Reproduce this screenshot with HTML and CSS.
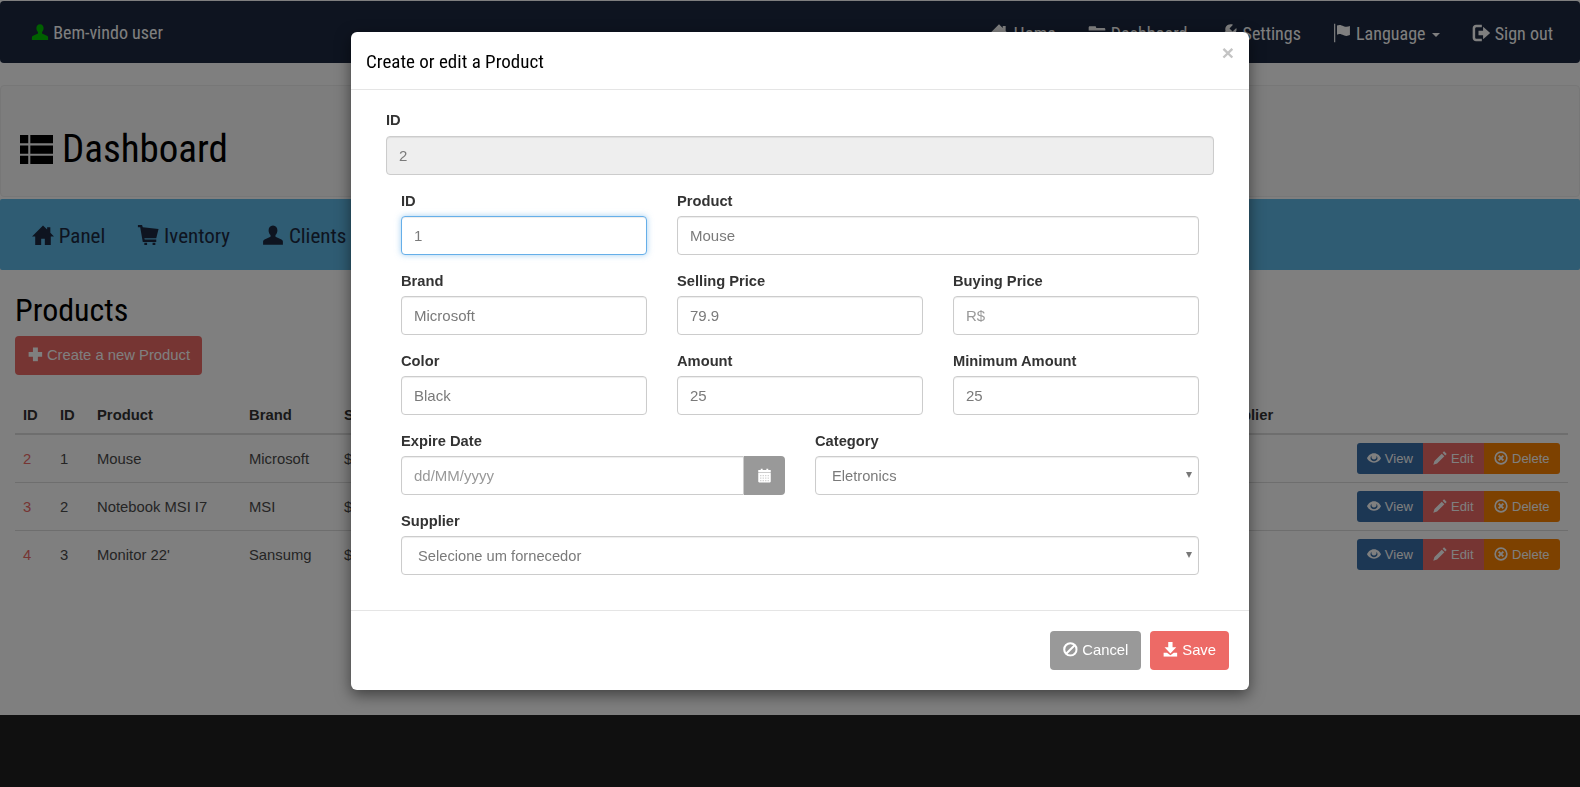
FILE: index.html
```html
<!DOCTYPE html>
<html lang="en">
<head>
    <meta charset="UTF-8">
    <meta name="viewport" content="width=device-width, initial-scale=1.0">
    <title>Dashboard</title>
    <link rel="stylesheet" href="styles.css">
</head>
<body>
    <svg class="sprite" aria-hidden="true">
        <symbol id="i-user" viewBox="0 0 24 24"><path d="M12 1.500c-3.200 0-4.800 2.400-4.800 5.200 0 2.100.8 4.100 2.100 5.400v1.800L2.800 17c-1.100.5-1.600 1.300-1.600 2.500v3h21.600v-3c0-1.200-.5-2-1.600-2.500l-6.500-3.100v-1.800c1.300-1.300 2.100-3.300 2.100-5.400 0-2.800-1.600-5.200-4.800-5.200z"/></symbol>
        <symbol id="i-home" viewBox="0 0 24 24"><path d="M12 1.500 0 13.500h3.500V23h6.500v-7h4v7h6.500v-9.500H24L20 9.500V3.500h-3.500v2.500z"/></symbol>
        <symbol id="i-folder" viewBox="0 0 24 24"><path d="M2 9V5.500C2 4.700 2.700 4 3.500 4h6c.8 0 1.500.7 1.500 1.500V6h9.500c.8 0 1.500.7 1.500 1.500V9zM2 11h20v8.500c0 .8-.7 1.500-1.500 1.500h-17C2.700 21 2 20.300 2 19.500z"/></symbol>
        <symbol id="i-wrench" viewBox="0 0 24 24"><path d="M22 6l-4.500 4.200-3.700-3.700L18 2c-3-1.200-6.500-.4-8.300 2.200-1.100 1.700-1.200 3.700-.6 5.500L2.500 16.300c-1.200 1.200-1.200 3 0 4.200s3 1.200 4.200 0l6.600-6.600c1.800.6 3.900.4 5.600-.7C21.400 11.600 23.100 8.900 22 6z"/></symbol>
        <symbol id="i-flag" viewBox="0 0 24 24"><path d="M2.500 1h1.400v22H2.500zM6 3c3-1.500 5.500-.3 8 .8 2.500 1 5 .9 7.500-.3v11c-2.500 1.200-5 1.300-7.500.3-2.500-1.100-5-2.300-8-.8z"/></symbol>
        <symbol id="i-logout" viewBox="0 0 24 24"><path d="M2 6c0-2.200 1.800-4 4-4h7v3H6.500C5.700 5 5 5.700 5 6.500v11c0 .8.700 1.500 1.500 1.500H13v3H6c-2.200 0-4-1.800-4-4zM9 9.200h5.500V4.500L23 12l-8.500 7.500v-4.700H9z"/></symbol>
        <symbol id="i-list" viewBox="0 0 24 24"><path d="M0 1.500h6v6H0zM7.500 1.500H24v6H7.500zM0 9h6v6H0zM7.500 9H24v6H7.500zM0 16.500h6v6H0zM7.500 16.500H24v6H7.500z"/></symbol>
        <symbol id="i-cart" viewBox="0 0 24 24"><path d="M1 1h4.500l.8 2.500L23.500 5.500 21 15.500H8l.4 1.500H21v2.500H6.300L3.500 3.500H1zM8 20.500h3v2.500H8zM17 20.500h3v2.500h-3z"/></symbol>
        <symbol id="i-plus" viewBox="0 0 24 24"><path d="M8 1h8v7h7v8h-7v7H8v-7H1V8h7z"/></symbol>
        <symbol id="i-eye" viewBox="0 0 24 24"><path fill-rule="evenodd" d="M12 4C6 4 2 8.500 0 12.500 2 16.500 6 20 12 20s10-3.500 12-7.500C22 8.500 18 4 12 4zM12 17.500c-3.200 0-6-2.200-6-5 0-1.700.8-3.200 2-4.200-.2.600-.3 1.200-.3 1.900 0 2.500 1.900 4.300 4.300 4.300s4.300-1.800 4.300-4.300c0-.7-.1-1.300-.3-1.900 1.200 1 2 2.500 2 4.200 0 2.800-2.800 5-6 5z"/></symbol>
        <symbol id="i-pencil" viewBox="0 0 24 24"><path d="M19 .5l4.500 4.500-2.500 2.500-4.500-4.500zM15 4.500l4.500 4.500L7 21.500.5 23.500 2.500 17z"/></symbol>
        <symbol id="i-remove" viewBox="0 0 24 24"><circle cx="12" cy="12" r="10" fill="none" stroke="currentColor" stroke-width="2.800"/><path d="M8 8l8 8M16 8l-8 8" stroke="currentColor" stroke-width="3.400" fill="none"/></symbol>
        <symbol id="i-ban" viewBox="0 0 24 24"><circle cx="12" cy="12" r="10" fill="none" stroke="currentColor" stroke-width="3.400"/><path d="M5.500 18.500l13-13" stroke="currentColor" stroke-width="3.400" fill="none"/></symbol>
        <symbol id="i-calendar" viewBox="0 0 24 24"><path d="M6 1h3v2h6V1h3v2h3.500c.3 0 .5.200.5.500V7H2V3.500c0-.3.200-.5.500-.5H6zM2 8h20v13.500c0 .8-.7 1.500-1.500 1.500h-17C2.700 23 2 22.300 2 21.500z"/><path fill="#cfcfcf" d="M5 11h2v2H5zM9 11h2v2H9zM13 11h2v2h-2zM17 11h2v2h-2zM5 15h2v2H5zM9 15h2v2H9zM13 15h2v2h-2zM17 15h2v2h-2zM5 19h2v2H5zM9 19h2v2H9zM13 19h2v2h-2zM17 19h2v2h-2z"/></symbol>
        <symbol id="i-download" viewBox="0 0 24 24"><path d="M8.500 0h7v8.500h6L12 18.500 2.500 8.500h6zM1 17.500h5.500l5.500 4 5.500-4H23V24H1z"/></symbol>
    </svg>

    <div class="page">
        <nav class="topbar">
            <div class="welcome"><svg class="icon icon-green"><use href="#i-user"/></svg> Bem-vindo user</div>
            <ul class="topmenu">
                <li><svg class="icon"><use href="#i-home"/></svg> Home</li>
                <li><svg class="icon"><use href="#i-folder"/></svg> Dashboard</li>
                <li><svg class="icon"><use href="#i-wrench"/></svg> Settings</li>
                <li><svg class="icon"><use href="#i-flag"/></svg> Language <span class="caret"></span></li>
                <li><svg class="icon"><use href="#i-logout"/></svg> Sign out</li>
            </ul>
        </nav>

        <header class="jumbo">
            <h1><svg class="icon icon-list"><use href="#i-list"/></svg> Dashboard</h1>
        </header>

        <ul class="subnav">
            <li><svg class="icon"><use href="#i-home"/></svg> Panel</li>
            <li><svg class="icon"><use href="#i-cart"/></svg> Iventory</li>
            <li><svg class="icon"><use href="#i-user"/></svg> Clients</li>
        </ul>

        <main class="content">
            <h2>Products</h2>
            <button class="btn btn-red btn-create"><svg class="icon"><use href="#i-plus"/></svg> Create a new Product</button>

            <table class="products">
                <colgroup>
                    <col class="c-id"><col class="c-id"><col class="c-product"><col class="c-brand"><col class="c-price"><col class="c-supplier"><col class="c-actions">
                </colgroup>
                <thead>
                    <tr><th>ID</th><th>ID</th><th>Product</th><th>Brand</th><th>Selling Price</th><th>Supplier</th><th></th></tr>
                </thead>
                <tbody>
                    <tr>
                        <td><a class="rowlink">2</a></td><td>1</td><td>Mouse</td><td>Microsoft</td><td>$ 79.9</td><td></td>
                        <td class="actions"><div class="btn-group"><button class="mini mini-blue"><svg class="icon"><use href="#i-eye"/></svg> View</button><button class="mini mini-red"><svg class="icon"><use href="#i-pencil"/></svg> Edit</button><button class="mini mini-orange"><svg class="icon"><use href="#i-remove"/></svg> Delete</button></div></td>
                    </tr>
                    <tr>
                        <td><a class="rowlink">3</a></td><td>2</td><td>Notebook MSI I7</td><td>MSI</td><td>$ 3500</td><td></td>
                        <td class="actions"><div class="btn-group"><button class="mini mini-blue"><svg class="icon"><use href="#i-eye"/></svg> View</button><button class="mini mini-red"><svg class="icon"><use href="#i-pencil"/></svg> Edit</button><button class="mini mini-orange"><svg class="icon"><use href="#i-remove"/></svg> Delete</button></div></td>
                    </tr>
                    <tr>
                        <td><a class="rowlink">4</a></td><td>3</td><td>Monitor 22'</td><td>Sansumg</td><td>$ 600</td><td></td>
                        <td class="actions"><div class="btn-group"><button class="mini mini-blue"><svg class="icon"><use href="#i-eye"/></svg> View</button><button class="mini mini-red"><svg class="icon"><use href="#i-pencil"/></svg> Edit</button><button class="mini mini-orange"><svg class="icon"><use href="#i-remove"/></svg> Delete</button></div></td>
                    </tr>
                </tbody>
            </table>
        </main>
    </div>

    <div class="backdrop"></div>

    <div class="modal">
        <div class="modal-header">
            <h4>Create or edit a Product</h4>
            <span class="close">×</span>
        </div>
        <form class="modal-body">
            <div class="field field-id">
                <label>ID</label>
                <input type="text" value="2" disabled>
            </div>
            <div class="form-grid">
                <div class="field span-2">
                    <label>ID</label>
                    <input type="text" class="focused" value="1">
                </div>
                <div class="field span-4">
                    <label>Product</label>
                    <input type="text" value="Mouse">
                </div>
                <div class="field span-2">
                    <label>Brand</label>
                    <input type="text" value="Microsoft">
                </div>
                <div class="field span-2">
                    <label>Selling Price</label>
                    <input type="text" value="79.9">
                </div>
                <div class="field span-2">
                    <label>Buying Price</label>
                    <input type="text" placeholder="R$">
                </div>
                <div class="field span-2">
                    <label>Color</label>
                    <input type="text" value="Black">
                </div>
                <div class="field span-2">
                    <label>Amount</label>
                    <input type="text" value="25">
                </div>
                <div class="field span-2">
                    <label>Minimum Amount</label>
                    <input type="text" value="25">
                </div>
                <div class="field span-3">
                    <label>Expire Date</label>
                    <div class="input-group">
                        <input type="text" placeholder="dd/MM/yyyy">
                        <span class="addon"><svg class="icon"><use href="#i-calendar"/></svg></span>
                    </div>
                </div>
                <div class="field span-3">
                    <label>Category</label>
                    <div class="select-wrap">
                        <select><option>Eletronics</option></select>
                    </div>
                </div>
                <div class="field span-6">
                    <label>Supplier</label>
                    <div class="select-wrap">
                        <select><option>Selecione um fornecedor</option></select>
                    </div>
                </div>
            </div>
        </form>
        <div class="modal-footer">
            <button class="btn btn-gray"><svg class="icon"><use href="#i-ban"/></svg> Cancel</button>
            <button class="btn btn-red"><svg class="icon"><use href="#i-download"/></svg> Save</button>
        </div>
    </div>
</body>
</html>
```

FILE: styles.css
```css
* {
    box-sizing: border-box;
}
html, body {
    height: 100%;
}
body {
    margin: 0;
    background-color: #202020;
    color: #333;
    font-family: "Liberation Sans", Arial, sans-serif;
    font-size: 14.8px;
    line-height: 20px;
    overflow: hidden;
}
ul {
    list-style: none;
    margin: 0;
    padding: 0;
}
button {
    font-family: inherit;
}
.sprite {
    display: none;
}
.icon {
    width: 1em;
    height: 1em;
    fill: currentColor;
    vertical-align: -0.12em;
}
.page {
    height: 715px;
    padding-top: 1px;
    background-color: #fff;
}

/* top bar */
.topbar {
    display: flex;
    justify-content: space-between;
    align-items: center;
    height: 62px;
    padding: 2px 27px 0 31px;
    background-color: #1c2840;
    border-radius: 4px;
    color: #fff;
    font-family: Roboto, "Liberation Sans", sans-serif;
    font-size: 18px;
    font-stretch: 75%;
}
.icon-green {
    color: #00c000;
}
.topmenu {
    display: flex;
    gap: 31px;
}
.topmenu .icon {
    width: 20px;
    height: 20px;
    vertical-align: -3px;
}
.caret {
    display: inline-block;
    margin-left: 2px;
    vertical-align: middle;
    border-top: 4px solid currentColor;
    border-left: 4px solid transparent;
    border-right: 4px solid transparent;
}

/* heading */
.jumbo {
    display: flex;
    align-items: center;
    height: 112px;
    margin-top: 22px;
    padding: 16px 0 0 19px;
    background-color: #fafafa;
    border: 1px solid #eee;
    border-radius: 4px;
}
.jumbo h1 {
    margin: 0;
    color: #000;
    font-family: Roboto, "Liberation Sans", sans-serif;
    font-size: 39px;
    font-stretch: 75%;
    font-weight: normal;
    line-height: 44px;
}
.icon-list {
    width: 33px;
    height: 33px;
    vertical-align: -4px;
}
.subnav {
    display: flex;
    gap: 32px;
    align-items: center;
    height: 71px;
    margin-top: 2px;
    padding: 1px 0 0 32px;
    background-color: #5eb8e6;
    border-radius: 2px;
    color: #1c2840;
    font-family: Roboto, "Liberation Sans", sans-serif;
    font-size: 21px;
    font-stretch: 75%;
}
.subnav .icon {
    width: 22px;
    height: 22px;
    vertical-align: -3px;
}

/* products */
.content {
    padding: 0 12px 0 15px;
}
.content h2 {
    margin: 20px 0 6px;
    color: #000;
    font-family: Roboto, "Liberation Sans", sans-serif;
    font-size: 32px;
    font-stretch: 75%;
    font-weight: normal;
    line-height: 40px;
}
.btn {
    height: 39px;
    padding: 0 13px;
    border: none;
    border-radius: 4px;
    color: #fff;
    font-size: 14.8px;
}
.btn-red {
    background-color: #ed6a66;
}
.btn-gray {
    background-color: #999;
}
.btn-create {
    width: 187px;
    white-space: nowrap;
}
.products {
    width: 1553px;
    margin-top: 21px;
    border-collapse: collapse;
    table-layout: fixed;
}
.c-id {
    width: 37px;
}
.c-product {
    width: 152px;
}
.c-brand {
    width: 95px;
}
.c-price {
    width: 870px;
}
.c-supplier {
    width: 127px;
}
.c-actions {
    width: 235px;
}
.products th {
    height: 38px;
    padding: 8px;
    border-bottom: 2px solid #ddd;
    text-align: left;
}
.products td {
    height: 48px;
    padding: 8px;
    border-bottom: 1px solid #ddd;
    color: #4a4a4a;
}
.products tr:last-child td {
    border-bottom: none;
}
.rowlink {
    color: #ed6a66;
}
.actions {
    text-align: right;
}
.btn-group {
    display: inline-flex;
    vertical-align: middle;
}
.mini {
    height: 31px;
    padding: 0;
    border: none;
    color: #fff;
    font-size: 13px;
    white-space: nowrap;
}
.mini .icon {
    width: 14px;
    height: 14px;
    vertical-align: -2px;
}
.mini-blue {
    width: 66px;
    background-color: #386ea8;
    border-radius: 3px 0 0 3px;
}
.mini-red {
    width: 61px;
    background-color: #ed6a66;
}
.mini-orange {
    width: 76px;
    background-color: #fb8200;
    border-radius: 0 3px 3px 0;
}

/* modal */
.backdrop {
    position: fixed;
    inset: 0;
    background-color: rgba(0, 0, 0, 0.5);
}
.modal {
    position: absolute;
    top: 32px;
    left: 351px;
    width: 898px;
    height: 658px;
    background-color: #fff;
    border-radius: 6px;
    box-shadow: 0 5px 15px rgba(0, 0, 0, 0.5);
}
.modal-header {
    position: relative;
    height: 58px;
    padding: 19px 15px 0;
    border-bottom: 1px solid #e5e5e5;
}
.modal-header h4 {
    margin: 0;
    color: #000;
    font-family: Roboto, "Liberation Sans", sans-serif;
    font-size: 19px;
    font-stretch: 75%;
    font-weight: normal;
    line-height: 22px;
}
.close {
    position: absolute;
    top: 11px;
    right: 15px;
    color: #c4c4c4;
    font-size: 21px;
    font-weight: bold;
}
.modal-body {
    height: 520px;
    padding: 20px 35px 0;
}
.field label {
    display: block;
    margin-bottom: 5px;
    font-size: 14.7px;
    font-weight: bold;
}
.field input,
.field select {
    display: block;
    width: 100%;
    height: 39px;
    padding: 6px 12px;
    background-color: #fff;
    border: 1px solid #ccc;
    border-radius: 4px;
    box-shadow: inset 0 1px 1px rgba(0, 0, 0, 0.075);
    color: #7a7a7a;
    font-family: inherit;
    font-size: 15px;
    outline: none;
}
.field input::placeholder {
    color: #999;
}
.field input:disabled {
    background-color: #eee;
}
.field input.focused {
    border-color: #66afe9;
    box-shadow: inset 0 1px 1px rgba(0, 0, 0, 0.075), 0 0 6px rgba(102, 175, 233, 0.6);
}
.field-id label {
    margin-bottom: 6px;
}
.field-id {
    margin-bottom: 16px;
}
.form-grid {
    display: grid;
    grid-template-columns: repeat(6, 1fr);
    gap: 16px 30px;
    padding: 0 15px;
}
.span-2 {
    grid-column: span 2;
}
.span-3 {
    grid-column: span 3;
}
.span-4 {
    grid-column: span 4;
}
.span-6 {
    grid-column: span 6;
}
.input-group {
    display: flex;
}
.input-group input {
    flex: 1;
    border-radius: 4px 0 0 4px;
}
.addon {
    display: flex;
    align-items: center;
    justify-content: center;
    width: 41px;
    height: 39px;
    background-color: #999;
    border-radius: 0 4px 4px 0;
    color: #fff;
    font-size: 15px;
}
.select-wrap {
    position: relative;
}
.select-wrap select {
    padding-left: 16px;
    font-size: 14.7px;
    appearance: none;
}
.select-wrap::after {
    content: "";
    position: absolute;
    top: 16px;
    right: 7px;
    border-top: 6px solid #777;
    border-left: 3px solid transparent;
    border-right: 3px solid transparent;
}
.modal-footer {
    display: flex;
    justify-content: flex-end;
    gap: 9px;
    height: 80px;
    padding: 20px 20px 0;
    border-top: 1px solid #e5e5e5;
}
```
